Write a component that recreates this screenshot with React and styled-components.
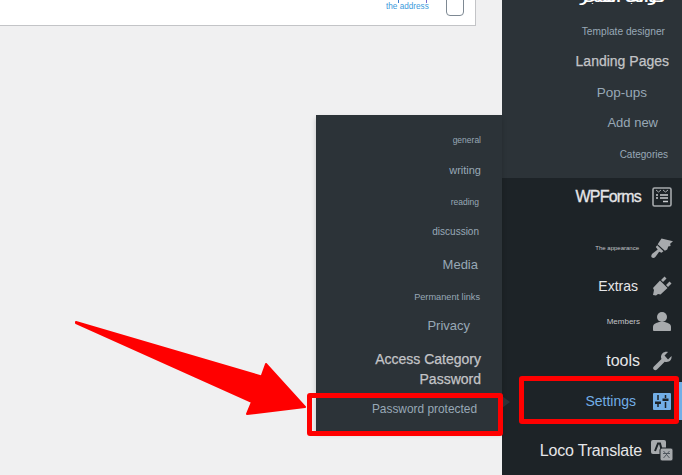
import React from "react";
import styled, { createGlobalStyle } from "styled-components";

const Global = createGlobalStyle`
  html, body { margin: 0; padding: 0; background: #f0f0f1; }
  body { font-family: "Liberation Sans", Arial, sans-serif; }
`;

const Page = styled.div`
  position: relative;
  width: 682px;
  height: 475px;
  overflow: hidden;
  display: flex;
  background: #f0f0f1;
`;
const Main = styled.main`
  width: 502px;
  flex: none;
`;
const Card = styled.section`
  width: 476px;
  height: 26px;
  box-sizing: border-box;
  background: #fff;
  border-right: 1px solid #c3c4c7;
  border-bottom: 1px solid #c3c4c7;
  display: flex;
  justify-content: flex-end;
  align-items: flex-start;
  overflow: hidden;
`;
const Address = styled.div`
  width: 42px;
  margin-right: 18px;
  color: #3c9bdc;
  font-size: 8.2px;
  line-height: 10px;
  white-space: nowrap;
  margin-top: 2px;
`;
const Check = styled.span`
  width: 18px;
  height: 20px;
  margin: -4px 11px 0 0;
  box-sizing: border-box;
  border: 1px solid #7e8993;
  border-radius: 4px;
  background: #fff;
`;
const ClippedMark = styled.span`
  position: absolute;
  top: 0;
  width: 1px;
  height: 3px;
  background: ${(p) => p.$color};
  left: ${(p) => p.$x}px;
`;
const Sidebar = styled.nav`
  width: 180px;
  flex: none;
  display: flex;
  flex-direction: column;
  background: #1d2327;
  overflow: hidden;
`;
const Submenu = styled.div`
  height: 178px;
  background: #2c3338;
  display: flex;
  flex-direction: column;
  flex: none;
`;
const SubRow = styled.div`
  height: ${(p) => p.$h}px;
  display: flex;
  align-items: center;
  justify-content: flex-end;
  padding-right: ${(p) => p.$pr}px;
  font-size: ${(p) => p.$size}px;
  color: ${(p) => p.$color || "#98a8b6"};
  -webkit-text-stroke: ${(p) => p.$stroke || 0}px ${(p) => p.$color || "#98a8b6"};
  white-space: nowrap;
`;
const Clipped = styled.div`
  height: 16px;
  overflow: hidden;
  display: flex;
  justify-content: flex-end;
  padding-right: 17px;
  color: #fff;
  font-family: "DejaVu Sans", sans-serif;
  font-weight: 700;
  font-size: 13px;
  line-height: 22px;
  white-space: nowrap;
`;
const ClippedText = styled.span`
  margin-top: -13px;
  height: 30px;
  direction: rtl;
`;
const MenuRow = styled.div`
  height: ${(p) => p.$h}px;
  margin-top: ${(p) => p.$top || 0}px;
  display: flex;
  align-items: center;
  justify-content: flex-end;
  gap: ${(p) => p.$gap}px;
  padding-right: 9px;
  font-size: ${(p) => p.$size}px;
  letter-spacing: ${(p) => p.$track || 0}px;
  color: ${(p) => p.$color || "#e6e6e8"};
  -webkit-text-stroke: ${(p) => p.$stroke || 0}px ${(p) => p.$color || "#e6e6e8"};
  white-space: nowrap;
`;
const IconSlot = styled.span`
  width: 22px;
  height: 22px;
  flex: none;
  display: flex;
  align-items: center;
  justify-content: center;
  svg { display: block; }
`;
const Bar = styled.span`
  position: absolute;
  right: 0;
  top: 382px;
  width: 3px;
  height: 38px;
  background: #72aee6;
`;
const Flyout = styled.div`
  position: absolute;
  left: 316px;
  top: 115px;
  width: 186px;
  height: 316px;
  box-sizing: border-box;
  padding-top: 10px;
  background: #2c3338;
  box-shadow: 0 3px 5px rgba(0, 0, 0, 0.2);
  display: flex;
  flex-direction: column;
`;
const FlyRow = styled(SubRow)`
  text-align: right;
  line-height: 20px;
`;
const Pointer = styled.span`
  position: absolute;
  left: 502px;
  top: 396px;
  border-style: solid;
  border-width: 6px 0 6px 8px;
  border-color: transparent transparent transparent #2c3338;
`;
const RedBox = styled.div`
  position: absolute;
  left: ${(p) => p.$x}px;
  top: ${(p) => p.$y}px;
  width: ${(p) => p.$w}px;
  height: ${(p) => p.$h}px;
  box-sizing: border-box;
  border: 5px solid #ff0000;
  border-radius: 3px;
`;
const ArrowSvg = styled.svg`
  position: absolute;
  left: 0;
  top: 0;
`;

const grey = "#a7aaad";

const FormsIcon = () => (
  <svg width="20" height="20" viewBox="0 0 20 20" fill="none" stroke={grey}>
    <rect x="1" y="1" width="18" height="18" rx="1.5" strokeWidth="1.6" />
    <path d="M4 3l2.500 2L9 3M11 3l2.500 2L16 3" strokeWidth="1" />
    <path d="M4 8h2M8 8h8M4 11h2M8 11h8M11 14.500h5" strokeWidth="1.400" stroke="#c9ccce" />
  </svg>
);
const BrushIcon = () => (
  <svg width="23" height="22" viewBox="0 0 23 22" fill={grey}>
    <path d="M7 7 11 1l12 3-3 2.500.5 2.500-2.500.5-1 3-2.500 1.500z" />
    <path d="M6.500 8 13 14.500 11 16l-2.500-1-4 5.500C3 22 .5 21.500.3 20c-.2-1.300.5-2.500 1.700-3.500L7 12.500 5 10z" />
  </svg>
);
const PlugIcon = () => (
  <svg width="20" height="20" viewBox="0 0 20 20" fill={grey}>
    <path d="M1 19l1-5-1-2 7-7.500 7.500 7.500-7 6.500-2.500-.5-2 1.500z" />
    <path d="M9 4l3.500-3.500 2 2L11 6zM14 9l3.500-3.500 2 2L16 11z" />
  </svg>
);
const UserIcon = () => (
  <svg width="18" height="20" viewBox="0 0 18 20" fill={grey}>
    <circle cx="9" cy="6" r="5" />
    <path d="M0 19v-3c0-3 3-4 6-5h6c3 1 6 2 6 5v3c0 .5-.5 1-1 1H1c-.5 0-1-.5-1-1z" />
  </svg>
);
const WrenchIcon = () => (
  <svg width="20" height="20" viewBox="0 0 20 20" fill={grey}>
    <path d="M19.500 5c.500 3-1.500 6-5 6-.7 0-1.300-.1-1.800-.3L5 18.500c-1 1-2.300 1-3.200.1s-.9-2.300.1-3.200L9.500 8c-.3-.7-.5-1.300-.5-2 0-3.500 3.500-6 7-5l-3.500 3.500 3.500 4z" />
  </svg>
);
const SettingsIcon = () => (
  <svg width="18" height="17" viewBox="0 0 18 17">
    <rect width="18" height="17" rx="1" fill="#72aee6" />
    <path d="M5 2v5M5 11v3M12.500 2v3M12.500 9v6" stroke="#1d2327" strokeWidth="1.500" />
    <path d="M2 8.500h6v2.500H2zM9.500 5.500h6V8h-6z" fill="#1d2327" />
  </svg>
);
const LocoIcon = () => (
  <svg width="22" height="22" viewBox="0 0 22 22">
    <rect x="0" y="0" width="15" height="14" rx="2" fill="#a7aaad" />
    <path d="M4 11 7 3.500h2L11 11" fill="none" stroke="#1d2327" strokeWidth="2" />
    <rect x="9" y="8" width="13" height="13" rx="2" fill="#a7aaad" stroke="#1d2327" />
    <path d="M12.500 11l6 7M18.500 11l-6 7M12 13.500h7" stroke="#50575e" strokeWidth="1" />
  </svg>
);

const flyItems = [
  { t: "general", h: 30, pr: 21, size: 8.5 },
  { t: "writing", h: 30, pr: 21, size: 11 },
  { t: "reading", h: 33, pr: 23, size: 8.5 },
  { t: "discussion", h: 28, pr: 23, size: 10 },
  { t: "Media", h: 37, pr: 24, size: 13 },
  { t: "Permanent links", h: 27, pr: 22, size: 9.2 },
  { t: "Privacy", h: 31, pr: 32, size: 13 },
];

export default function App() {
  return (
    <Page>
      <Global />
      <Main>
        <Card>
          <Address>the address</Address>
          <Check />
        </Card>
      </Main>
      <ClippedMark $x={398} $color="#3c7fd0" />
      <ClippedMark $x={426} $color="#7a6fd0" />
      <Sidebar>
        <Submenu>
          <Clipped><ClippedText>قوالب المتجر</ClippedText></Clipped>
          <SubRow $h={30} $pr={17} $size={10.2}>Template designer</SubRow>
          <SubRow $h={30} $pr={13} $size={14} $color="#c3c4c7" $stroke={0.25}>Landing Pages</SubRow>
          <SubRow $h={32} $pr={35} $size={13.5}>Pop-ups</SubRow>
          <SubRow $h={28} $pr={24} $size={13}>Add new</SubRow>
          <SubRow $h={36} $pr={14} $size={10}>Categories</SubRow>
        </Submenu>
        <MenuRow $h={38} $gap={10} $size={16} $track={-0.8} $stroke={0.3}>WPForms<IconSlot><FormsIcon /></IconSlot></MenuRow>
        <MenuRow $h={40} $top={12} $gap={12} $size={6} $color="#c3c4c7">The appearance<IconSlot><BrushIcon /></IconSlot></MenuRow>
        <MenuRow $h={36} $gap={13} $size={14}>Extras<IconSlot><PlugIcon /></IconSlot></MenuRow>
        <MenuRow $h={34} $gap={11} $size={8} $color="#c3c4c7">Members<IconSlot><UserIcon /></IconSlot></MenuRow>
        <MenuRow $h={46} $gap={11} $size={16}>tools<IconSlot><WrenchIcon /></IconSlot></MenuRow>
        <MenuRow $h={34} $gap={15} $size={14} $color="#72aee6">Settings<IconSlot><SettingsIcon /></IconSlot></MenuRow>
        <MenuRow $h={38} $top={14} $gap={9} $size={16} $track={-0.2}>Loco Translate<IconSlot><LocoIcon /></IconSlot></MenuRow>
      </Sidebar>
      <Bar />
      <Flyout>
        {flyItems.map((i) => (
          <FlyRow key={i.t} $h={i.h} $pr={i.pr} $size={i.size}>{i.t}</FlyRow>
        ))}
        <FlyRow $h={56} $pr={21} $size={14} $color="#c3c4c7" $stroke={0.25}>
          <span>Access Category<br />Password</span>
        </FlyRow>
        <FlyRow $h={24} $pr={25} $size={11.9}>Password protected</FlyRow>
      </Flyout>
      <Pointer />
      <RedBox $x={307} $y={393} $w={196} $h={43} />
      <RedBox $x={519} $y={376} $w={160} $h={48} />
      <ArrowSvg width="682" height="475" viewBox="0 0 682 475">
        <path
          d="M76 322 261.500 376.500 266 364 305 407 247 414 252 402 76 323z"
          fill="#ff0000"
          stroke="#ff0000"
          strokeWidth="2"
          strokeLinejoin="round"
        />
      </ArrowSvg>
    </Page>
  );
}
